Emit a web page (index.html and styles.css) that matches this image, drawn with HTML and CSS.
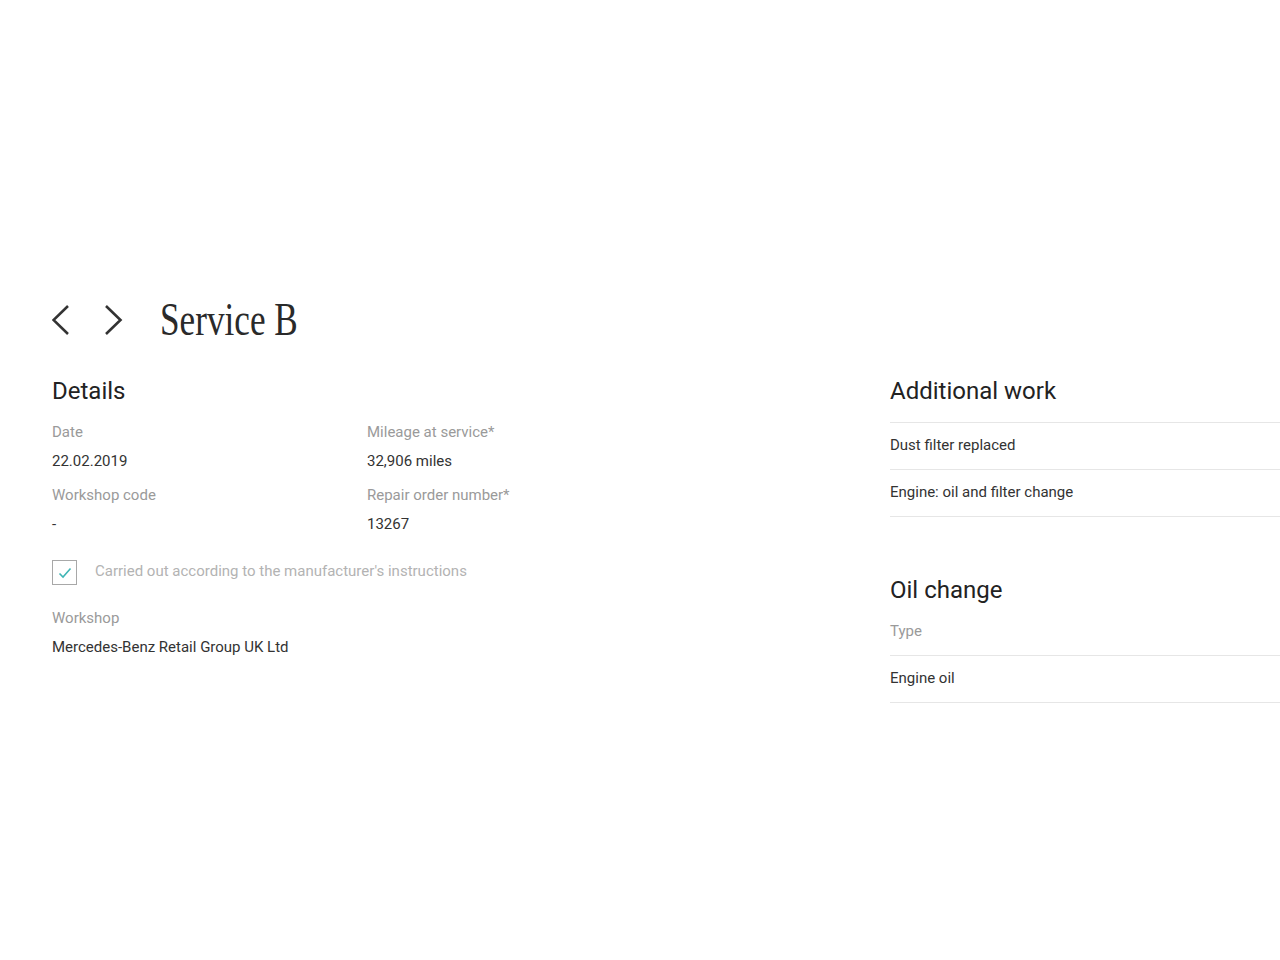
FILE: index.html
```html
<!DOCTYPE html>
<html lang="en">
<head>
  <meta charset="UTF-8">
  <meta name="viewport" content="width=device-width, initial-scale=1.0">
  <title>Service B</title>
  <link rel="stylesheet" href="styles.css">
</head>
<body>
  <div class="page">
    <div class="title-row">
      <button class="nav-btn" aria-label="Previous">
        <svg width="20" height="32" viewBox="0 0 20 32"><polyline points="16,2 1.5,16 16,30" fill="none" stroke="#333" stroke-width="2.6"/></svg>
      </button>
      <button class="nav-btn" aria-label="Next">
        <svg width="20" height="32" viewBox="0 0 20 32"><polyline points="2,2 16.5,16 2,30" fill="none" stroke="#333" stroke-width="2.6"/></svg>
      </button>
      <h1 class="title"><span>Service B</span></h1>
    </div>

    <div class="columns">
      <section class="details">
        <h2 class="heading">Details</h2>
        <div class="fields">
          <div class="field">
            <div class="label">Date</div>
            <div class="value">22.02.2019</div>
          </div>
          <div class="field">
            <div class="label">Mileage at service*</div>
            <div class="value">32,906 miles</div>
          </div>
          <div class="field">
            <div class="label">Workshop code</div>
            <div class="value">-</div>
          </div>
          <div class="field">
            <div class="label">Repair order number*</div>
            <div class="value">13267</div>
          </div>
        </div>

        <div class="check-row">
          <span class="checkbox">
            <svg width="14" height="12" viewBox="0 0 14 12"><polyline points="1.5,6.5 5,10 12.5,1.5" fill="none" stroke="#3fb5b5" stroke-width="1.6"/></svg>
          </span>
          <span class="check-text">Carried out according to the manufacturer's instructions</span>
        </div>

        <div class="field workshop">
          <div class="label">Workshop</div>
          <div class="value">Mercedes-Benz Retail Group UK Ltd</div>
        </div>
      </section>

      <section class="side">
        <h2 class="heading">Additional work</h2>
        <ul class="list">
          <li>Dust filter replaced</li>
          <li>Engine: oil and filter change</li>
        </ul>

        <h2 class="heading oil">Oil change</h2>
        <div class="list-label">Type</div>
        <ul class="list">
          <li>Engine oil</li>
        </ul>
      </section>
    </div>
  </div>
</body>
</html>
```

FILE: styles.css
```css
body {
  margin: 0;
  background: #fff;
  color: #333;
  font-family: Roboto, "Liberation Sans", sans-serif;
  overflow: hidden;
}

.page {
  padding: 296px 0 0 52px;
}

.title-row {
  display: flex;
  align-items: center;
  height: 48px;
}

.nav-btn {
  background: none;
  border: none;
  padding: 0;
  width: 20px;
  height: 32px;
  margin-right: 32px;
  cursor: pointer;
}

.nav-btn + .nav-btn {
  margin-right: 36px;
}

.title {
  margin: 0;
  font-family: "Liberation Serif", serif;
  font-weight: normal;
  font-size: 46px;
  line-height: 48px;
  color: #2a2a2a;
}

.title span {
  display: inline-block;
  transform: scaleX(0.765);
  transform-origin: left center;
}

.columns {
  display: flex;
  margin-top: 32px;
}

.details {
  width: 838px;
  flex-shrink: 0;
}

.side {
  width: 420px;
  flex-shrink: 0;
}

.heading {
  margin: 0;
  font-size: 24px;
  line-height: 30px;
  font-weight: normal;
  color: #222;
}

.fields {
  display: grid;
  grid-template-columns: 315px 315px;
  row-gap: 14px;
  margin-top: 16px;
}

.label {
  font-size: 15px;
  line-height: 20px;
  color: #9a9a9a;
}

.value {
  font-size: 15px;
  line-height: 20px;
  margin-top: 9px;
  color: #333;
}

.check-row {
  display: flex;
  align-items: center;
  margin-top: 26px;
}

.checkbox {
  width: 23px;
  height: 23px;
  border: 1px solid #a8a8a8;
  display: flex;
  align-items: center;
  justify-content: center;
  margin-right: 18px;
}

.check-text {
  font-size: 15px;
  line-height: 20px;
  margin-top: -3px;
  color: #b3b3b3;
}

.workshop {
  margin-top: 23px;
}

.list {
  list-style: none;
  margin: 16px 0 0;
  padding: 0;
  border-top: 1px solid #e6e6e6;
}

.list li {
  font-size: 15px;
  line-height: 20px;
  padding: 12px 0 14px;
  border-bottom: 1px solid #e6e6e6;
}

.heading.oil {
  margin-top: 58px;
}

.list-label {
  font-size: 15px;
  line-height: 20px;
  color: #9a9a9a;
  margin-top: 16px;
  padding-bottom: 14px;
}

.list-label + .list {
  margin-top: 0;
}
```
